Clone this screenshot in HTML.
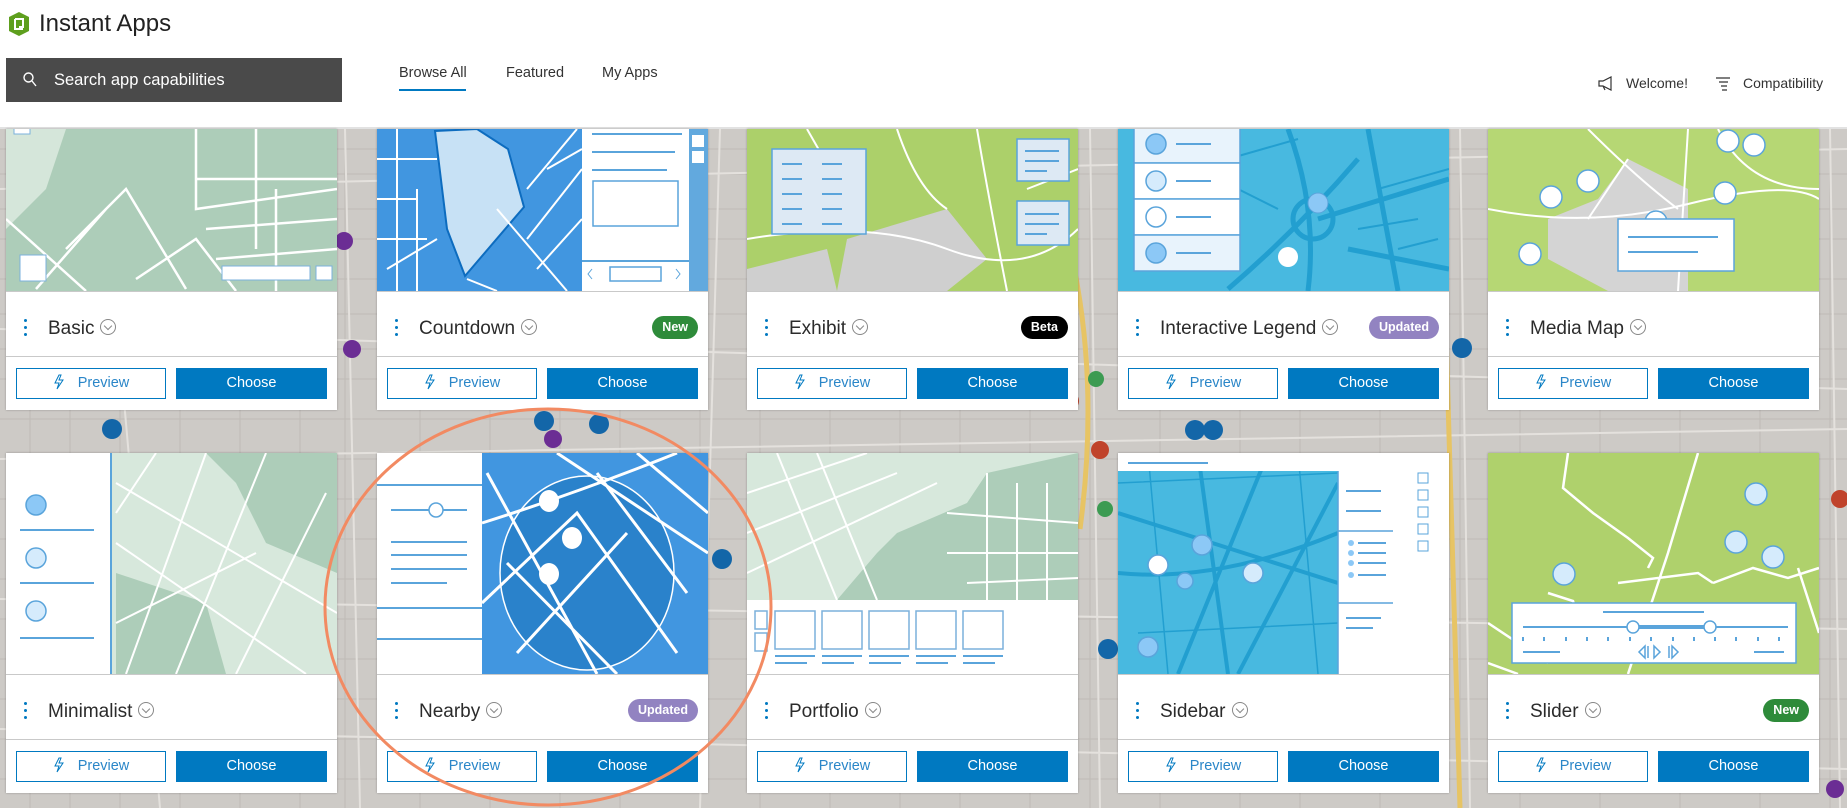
<!DOCTYPE html>
<html><head><meta charset="utf-8">
<style>
*{box-sizing:border-box;margin:0;padding:0}
body{width:1847px;height:808px;overflow:hidden;font-family:"Liberation Sans",sans-serif;position:relative;background:#cdcac6}
#map{position:absolute;left:0;top:129px;width:1847px;height:679px}
#hdr{position:absolute;left:0;top:0;width:1847px;height:129px;background:#fff;border-bottom:2px solid #e2e2e2}
.card{position:absolute;width:331px;background:#fff;box-shadow:0 0 2px rgba(0,0,0,.3)}
.img{display:block;width:331px}
.title{height:66px;border-top:1px solid #c9c9c9;border-bottom:1px solid #c9c9c9;position:relative}
.dots{position:absolute;left:18px;top:27px;width:4px}
.dots i{display:block;width:3px;height:3px;border-radius:50%;background:#0079c1;margin-bottom:4px}
.name{position:absolute;left:42px;top:26px;font-size:19px;color:#2b2b2b}
.chev{display:inline-block;width:16px;height:16px;border:1px solid #888;border-radius:50%;vertical-align:-1px;margin-left:6px;position:relative}
.chev:after{content:"";position:absolute;left:4px;top:3px;width:5px;height:5px;border-right:1px solid #888;border-bottom:1px solid #888;transform:rotate(45deg)}
.badge{position:absolute;right:10px;top:24px;height:23px;line-height:23px;border-radius:12px;color:#fff;font-size:12.5px;font-weight:bold;padding:0 10px}
.btns{height:53px;position:relative}
.pv,.ch{position:absolute;top:11px;height:31px;width:150px;font-size:14.5px;text-align:center;line-height:29px}
.pv{left:10px;border:1px solid #0079c1;color:#2a86c8;background:#fff}
.ch{left:170px;width:151px;background:#0079c1;color:#fff;line-height:31px}
.pv svg{vertical-align:-3px;margin-right:14px}
</style></head><body>
<svg id="map" viewBox="0 0 1847 679">
<rect width="1847" height="679" fill="#cdcac6"/>
<g stroke="#bcb8b3" stroke-width="1" fill="none" opacity=".8">
<path d="M0 20H1847M0 45H1847M0 80H1847M0 110H1847M0 150H1847M0 185H1847M0 220H1847M0 250H1847M0 290H1847M0 330H1847M0 370H1847M0 410H1847M0 450H1847M0 490H1847M0 530H1847M0 570H1847M0 610H1847M0 650H1847"/>
<path d="M30 0V679M70 0V679M120 0V679M180 0V679M240 0V679M300 0V679M345 0V679M420 0V679M490 0V679M560 0V679M620 0V679M700 0V679M760 0V679M830 0V679M900 0V679M960 0V679M1030 0V679M1090 0V679M1160 0V679M1240 0V679M1300 0V679M1380 0V679M1460 0V679M1520 0V679M1600 0V679M1680 0V679M1760 0V679M1830 0V679"/>
</g>
<g stroke="#e4e1dd" stroke-width="2" fill="none">
<path d="M0 60 L1847 20 M0 200 L1847 260 M0 330 L1847 300 M0 470 L1847 500 M0 600 L1847 640 M100 0 L160 679 M345 0 L360 679 M720 0 L700 679 M1090 0 L1100 679 M1460 0 L1470 679 M1830 0 L1840 679"/>
</g>
<path d="M1440 0 L1460 679" stroke="#e7c464" stroke-width="5"/>
<path d="M1070 120 Q1100 250 1080 400" stroke="#e7c464" stroke-width="5" fill="none"/>
<g fill="#1366a8"><circle cx="112" cy="300" r="10"/><circle cx="544" cy="292" r="10"/><circle cx="599" cy="295" r="10"/><circle cx="722" cy="430" r="10"/><circle cx="1195" cy="301" r="10"/><circle cx="1213" cy="301" r="10"/><circle cx="1108" cy="520" r="10"/><circle cx="1462" cy="219" r="10"/></g>
<g fill="#6b2d94"><circle cx="344" cy="112" r="9"/><circle cx="352" cy="220" r="9"/><circle cx="553" cy="310" r="9"/><circle cx="1835" cy="660" r="9"/></g>
<g fill="#c0432b"><circle cx="1070" cy="272" r="9"/><circle cx="1100" cy="321" r="9"/><circle cx="1840" cy="370" r="9"/></g>
<g fill="#3c9b52"><circle cx="1096" cy="250" r="8"/><circle cx="1105" cy="380" r="8"/></g>
</svg>

<div id="hdr">
<svg style="position:absolute;left:8px;top:12px" width="22" height="24" viewBox="0 0 22 24"><path d="M11 0 L21 5 L21 19 L11 24 L1 19 L1 5Z" fill="#5e9f1e"/><path d="M7 7 H15 V15 H11 M7 7 V17 H15" stroke="#fff" stroke-width="2" fill="none"/></svg>
<div style="position:absolute;left:39px;top:10px;font-size:24px;color:#222">Instant Apps</div>
<div style="position:absolute;left:6px;top:58px;width:336px;height:44px;background:#4a4a4a">
<svg style="position:absolute;left:17px;top:14px" width="14" height="15" viewBox="0 0 14 15"><circle cx="5.5" cy="5.5" r="4.5" stroke="#fff" stroke-width="1.4" fill="none"/><path d="M9 9 L13 14" stroke="#fff" stroke-width="1.4"/></svg>
<div style="position:absolute;left:48px;top:13px;font-size:16.5px;color:#fff">Search app capabilities</div></div>
<div style="position:absolute;left:399px;top:65px;font-size:14.5px;color:#333">Browse All</div>
<div style="position:absolute;left:399px;top:89px;width:67px;height:2px;background:#0079c1"></div>
<div style="position:absolute;left:506px;top:65px;font-size:14.5px;color:#333">Featured</div>
<div style="position:absolute;left:602px;top:65px;font-size:14.5px;color:#333">My Apps</div>
<svg style="position:absolute;left:1598px;top:76px" width="16" height="15" viewBox="0 0 16 15"><path d="M1 5 H5 L13 1 V14 L5 10 H1Z M5 10 L7 14" stroke="#333" stroke-width="1.2" fill="none"/></svg>
<div style="position:absolute;left:1626px;top:75px;font-size:14px;color:#333">Welcome!</div>
<svg style="position:absolute;left:1715px;top:76px" width="16" height="16" viewBox="0 0 16 16"><path d="M1 2H15M4 6H13M6 10H12M7 14H12" stroke="#333" stroke-width="1.2"/></svg>
<div style="position:absolute;left:1743px;top:75px;font-size:14px;color:#333">Compatibility</div>
</div>

<!-- Row 1 -->
<div class="card" style="left:6px;top:129px">
<svg class="img" height="162" viewBox="0 0 331 162"><rect width="331" height="162" fill="#adcdb9"/><path d="M0 0 H60 L40 60 L0 100Z" fill="#d5e6da"/><g stroke="#fff" stroke-width="2.5" fill="none"><path d="M190 0 V50 H331 M250 0 V120 M190 50 V80 L331 60 M60 120 L120 60 L180 160 M30 160 L100 80 M0 90 L80 162 M200 100 L331 90 M210 130 L331 120 M270 60 V162 M130 150 L190 110 L230 162"/></g><rect x="14" y="126" width="26" height="26" fill="#fff" stroke="#7bb1dc"/><rect x="216" y="137" width="88" height="14" fill="#fff" stroke="#7bb1dc"/><rect x="310" y="137" width="16" height="14" fill="#fff" stroke="#7bb1dc"/><rect x="8" y="-5" width="16" height="10" fill="#fff" stroke="#7bb1dc"/></svg>
<div class="title"><div class="dots"><i></i><i></i><i></i></div><div class="name">Basic<span class="chev"></span></div></div>
<div class="btns"><div class="pv"><svg width="11" height="16" viewBox="0 0 11 16"><path d="M6 1 L2 9 H6 L4 15 L10 6 H6 L8 1Z" stroke="#0079c1" fill="none"/></svg>Preview</div><div class="ch">Choose</div></div></div>

<div class="card" style="left:377px;top:129px">
<svg class="img" height="162" viewBox="0 0 331 162"><rect width="331" height="162" fill="#4196e0"/><path d="M58 2 L100 0 L131 20 L147 78 L88 147 L70 100Z" fill="#c7e1f5" stroke="#0d6cbf" stroke-width="2"/><g stroke="#fff" stroke-width="2" fill="none"><path d="M0 30 H60 M0 70 H40 M20 0 V162 M40 60 V162 M0 110 H50 M10 140 L60 110 M120 162 L90 150 M120 80 L190 162 M150 60 L200 0 M150 110 L205 40 M160 140 L205 90 M170 40 L205 20"/></g><rect x="205" y="0" width="126" height="162" fill="#fff"/><rect x="312" y="0" width="19" height="162" fill="#62a9de"/><rect x="315" y="6" width="12" height="12" fill="#fff"/><rect x="315" y="22" width="12" height="12" fill="#fff"/><g stroke="#5aa4db" stroke-width="2"><path d="M215 5H305M215 23H298M215 41H290M205 132H312"/></g><rect x="216" y="52" width="85" height="45" fill="none" stroke="#5aa4db" stroke-width="1.5"/><rect x="233" y="138" width="51" height="14" fill="none" stroke="#5aa4db" stroke-width="1.5"/><path d="M215 140l-4 5 4 5M299 140l4 5-4 5" stroke="#5aa4db" fill="none"/></svg>
<div class="title"><div class="dots"><i></i><i></i><i></i></div><div class="name">Countdown<span class="chev"></span></div><div class="badge" style="background:#2e8b3a">New</div></div>
<div class="btns"><div class="pv"><svg width="11" height="16" viewBox="0 0 11 16"><path d="M6 1 L2 9 H6 L4 15 L10 6 H6 L8 1Z" stroke="#0079c1" fill="none"/></svg>Preview</div><div class="ch">Choose</div></div></div>

<div class="card" style="left:747px;top:129px">
<svg class="img" height="162" viewBox="0 0 331 162"><rect width="331" height="162" fill="#acd06a"/><path d="M100 110 L200 80 L240 130 L200 162 L90 162Z" fill="#cfcfcf"/><path d="M0 140 L80 120 L90 162 H0Z" fill="#cfcfcf"/><g stroke="#fff" stroke-width="2" fill="none"><path d="M0 110 Q120 90 200 120 T331 100 M150 0 Q170 60 200 80 M230 0 Q240 60 260 162 M60 0 L100 70 M280 60 L331 40"/></g><rect x="25" y="20" width="94" height="85" fill="#dde9f4" stroke="#5aa4db" stroke-width="1.5"/><g stroke="#5aa4db" stroke-width="2"><path d="M35 35H55M75 35H95M35 50H55M75 50H95M35 65H55M75 65H95M35 80H55M75 80H95M35 95H55M75 95H95"/></g><rect x="270" y="10" width="52" height="42" fill="#dde9f4" stroke="#5aa4db" stroke-width="1.5"/><path d="M278 22H312M278 32H312M278 42H300" stroke="#5aa4db" stroke-width="2"/><rect x="270" y="72" width="52" height="44" fill="#dde9f4" stroke="#5aa4db" stroke-width="1.5"/><path d="M278 85H312M278 95H312M278 105H300" stroke="#5aa4db" stroke-width="2"/></svg>
<div class="title"><div class="dots"><i></i><i></i><i></i></div><div class="name">Exhibit<span class="chev"></span></div><div class="badge" style="background:#000">Beta</div></div>
<div class="btns"><div class="pv"><svg width="11" height="16" viewBox="0 0 11 16"><path d="M6 1 L2 9 H6 L4 15 L10 6 H6 L8 1Z" stroke="#0079c1" fill="none"/></svg>Preview</div><div class="ch">Choose</div></div></div>

<div class="card" style="left:1118px;top:129px">
<svg class="img" height="162" viewBox="0 0 331 162"><rect width="331" height="162" fill="#48b9e0"/><g stroke="#229fd0" stroke-width="5" fill="none"><path d="M170 0 Q200 80 190 162 M110 160 Q180 100 240 30 M200 90 L331 50 M230 120 L331 140 M250 0 L280 162"/><circle cx="195" cy="90" r="20"/></g><g stroke="#229fd0" stroke-width="2" fill="none"><path d="M110 30 L180 10 M120 60 L160 80 M260 60 L331 40 M240 100 L300 90 M280 120 L320 110"/></g><circle cx="200" cy="74" r="10" fill="#8cc8f6" stroke="#5aa4db"/><circle cx="170" cy="128" r="10" fill="#fff"/><g fill="#e8f3fc" stroke="#5aa4db" stroke-width="1.5"><rect x="16" y="-2" width="106" height="36"/><rect x="16" y="34" width="106" height="36" fill="#fff"/><rect x="16" y="70" width="106" height="36" fill="#fff"/><rect x="16" y="106" width="106" height="36"/></g><g stroke="#5aa4db" stroke-width="1.5"><circle cx="38" cy="15" r="10" fill="#8cc8f6"/><circle cx="38" cy="52" r="10" fill="#d5ebfc"/><circle cx="38" cy="88" r="10" fill="#fff"/><circle cx="38" cy="124" r="10" fill="#8cc8f6"/></g><path d="M58 15H93M58 52H93M58 88H93M58 124H93" stroke="#5aa4db" stroke-width="2"/></svg>
<div class="title"><div class="dots"><i></i><i></i><i></i></div><div class="name">Interactive Legend<span class="chev"></span></div><div class="badge" style="background:#9283c1">Updated</div></div>
<div class="btns"><div class="pv"><svg width="11" height="16" viewBox="0 0 11 16"><path d="M6 1 L2 9 H6 L4 15 L10 6 H6 L8 1Z" stroke="#0079c1" fill="none"/></svg>Preview</div><div class="ch">Choose</div></div></div>

<div class="card" style="left:1488px;top:129px">
<svg class="img" height="162" viewBox="0 0 331 162"><rect width="331" height="162" fill="#b6d774"/><path d="M60 90 L110 70 L140 30 L200 60 L200 162 L120 162 L60 130Z" fill="#d4d4d4"/><g stroke="#fff" stroke-width="2" fill="none"><path d="M0 80 Q100 100 200 75 T331 70 M100 0 Q150 50 190 80 M140 30 L100 90 M230 0 Q260 60 331 60 M200 0 L190 162"/></g><g fill="#fff" stroke="#5aa4db" stroke-width="1.5"><circle cx="63" cy="68" r="11"/><circle cx="100" cy="52" r="11"/><circle cx="168" cy="93" r="11"/><circle cx="42" cy="125" r="11"/><circle cx="240" cy="12" r="11"/><circle cx="266" cy="16" r="11"/><circle cx="237" cy="64" r="11"/></g><rect x="130" y="90" width="116" height="52" fill="#fff" stroke="#5aa4db" stroke-width="1.5"/><path d="M140 108H230M140 123H210" stroke="#5aa4db" stroke-width="2"/></svg>
<div class="title"><div class="dots"><i></i><i></i><i></i></div><div class="name">Media Map<span class="chev"></span></div></div>
<div class="btns"><div class="pv"><svg width="11" height="16" viewBox="0 0 11 16"><path d="M6 1 L2 9 H6 L4 15 L10 6 H6 L8 1Z" stroke="#0079c1" fill="none"/></svg>Preview</div><div class="ch">Choose</div></div></div>

<!-- Row 2 -->
<div class="card" style="left:6px;top:453px">
<svg class="img" height="221" viewBox="0 0 331 221"><rect width="331" height="221" fill="#d7e8dc"/><path d="M200 0 H331 V120 L260 90 L230 30Z" fill="#adcdb9"/><path d="M110 120 L200 150 L220 221 H110Z" fill="#adcdb9"/><g stroke="#fff" stroke-width="2" fill="none"><path d="M110 30 L331 160 M110 90 L300 221 M150 0 L110 60 M200 0 L120 221 M260 0 L170 221 M320 40 L230 221 M110 170 L250 100"/></g><rect x="0" y="0" width="105" height="221" fill="#fff"/><g stroke="#5aa4db" stroke-width="1.5"><circle cx="30" cy="52" r="10" fill="#8cc8f6"/><circle cx="30" cy="105" r="10" fill="#d5ebfc"/><circle cx="30" cy="158" r="10" fill="#d5ebfc"/></g><path d="M14 77H88M14 130H88M14 185H88M105 0V221" stroke="#5aa4db" stroke-width="2"/></svg>
<div class="title"><div class="dots"><i></i><i></i><i></i></div><div class="name">Minimalist<span class="chev"></span></div></div>
<div class="btns"><div class="pv"><svg width="11" height="16" viewBox="0 0 11 16"><path d="M6 1 L2 9 H6 L4 15 L10 6 H6 L8 1Z" stroke="#0079c1" fill="none"/></svg>Preview</div><div class="ch">Choose</div></div></div>

<div class="card" style="left:377px;top:453px">
<svg class="img" height="221" viewBox="0 0 331 221"><rect width="331" height="221" fill="#4196e0"/><ellipse cx="210" cy="120" rx="87" ry="97" fill="#2a82cb" stroke="#fff" stroke-width="1.5"/><g stroke="#fff" stroke-width="3" fill="none"><path d="M105 70 Q200 40 300 0 M180 0 L331 100 M105 150 L200 60 L300 200 M140 200 L250 80 M110 20 L220 221 M260 0 L331 60 M220 20 L310 140 M130 110 L240 221"/></g><g fill="#fff"><ellipse cx="172" cy="48" rx="10" ry="11"/><ellipse cx="195" cy="85" rx="10" ry="11"/><ellipse cx="172" cy="121" rx="10" ry="11"/></g><rect x="0" y="0" width="105" height="221" fill="#fff"/><g stroke="#5aa4db" stroke-width="2"><path d="M0 32H105M14 57H90M14 89H90M14 102H90M14 116H90M14 130H70M0 155H105M0 186H105"/></g><circle cx="59" cy="57" r="7" fill="#fff" stroke="#5aa4db" stroke-width="1.5"/></svg>
<div class="title"><div class="dots"><i></i><i></i><i></i></div><div class="name">Nearby<span class="chev"></span></div><div class="badge" style="background:#9283c1">Updated</div></div>
<div class="btns"><div class="pv"><svg width="11" height="16" viewBox="0 0 11 16"><path d="M6 1 L2 9 H6 L4 15 L10 6 H6 L8 1Z" stroke="#0079c1" fill="none"/></svg>Preview</div><div class="ch">Choose</div></div></div>

<div class="card" style="left:747px;top:453px">
<svg class="img" height="221" viewBox="0 0 331 221"><rect width="331" height="221" fill="#d7e8dc"/><path d="M150 80 L220 50 L240 20 L331 0 V147 H90 L130 100Z" fill="#adcdb9"/><g stroke="#fff" stroke-width="2" fill="none"><path d="M0 40 L120 0 M0 80 L150 20 M0 120 L190 30 M30 0 L90 147 M70 0 L130 147 M200 60 L331 70 M200 100 L331 100 M220 130 L331 125 M240 20 V147 M270 30 V147 M300 30 V147"/></g><rect x="0" y="147" width="331" height="74" fill="#fff"/><g fill="none" stroke="#7bb1dc" stroke-width="1.5"><rect x="8" y="158" width="12" height="18"/><rect x="8" y="180" width="12" height="18"/><rect x="28" y="158" width="40" height="38"/><rect x="75" y="158" width="40" height="38"/><rect x="122" y="158" width="40" height="38"/><rect x="169" y="158" width="40" height="38"/><rect x="216" y="158" width="40" height="38"/></g><g stroke="#5aa4db" stroke-width="2"><path d="M28 203H68M28 210H60M75 203H115M75 210H107M122 203H162M122 210H154M169 203H209M169 210H201M216 203H256M216 210H248"/></g></svg>
<div class="title"><div class="dots"><i></i><i></i><i></i></div><div class="name">Portfolio<span class="chev"></span></div></div>
<div class="btns"><div class="pv"><svg width="11" height="16" viewBox="0 0 11 16"><path d="M6 1 L2 9 H6 L4 15 L10 6 H6 L8 1Z" stroke="#0079c1" fill="none"/></svg>Preview</div><div class="ch">Choose</div></div></div>

<div class="card" style="left:1118px;top:453px">
<svg class="img" height="221" viewBox="0 0 331 221"><rect width="331" height="221" fill="#48b9e0"/><g stroke="#229fd0" stroke-width="4" fill="none"><path d="M0 120 Q100 130 220 80 M80 0 L110 221 M0 60 L220 130 M150 0 L60 221 M220 30 L120 221"/></g><g stroke="#229fd0" stroke-width="1.5" fill="none"><path d="M0 30 L220 20 M20 180 L220 170 M180 0 L200 221 M30 0 L50 221"/></g><rect x="0" y="0" width="331" height="18" fill="#fff"/><path d="M10 10H90" stroke="#5aa4db" stroke-width="2"/><rect x="220" y="18" width="111" height="203" fill="#fff"/><path d="M220 18V221M220 78H275M220 150H275" stroke="#5aa4db" stroke-width="1.5"/><g stroke="#5aa4db" stroke-width="2"><path d="M228 38H263M228 58H263M240 90H268M240 100H268M240 110H268M240 122H268M228 165H263M228 175H255"/></g><g fill="#fff" stroke="#5aa4db"><rect x="300" y="20" width="10" height="10"/><rect x="300" y="37" width="10" height="10"/><rect x="300" y="54" width="10" height="10"/><rect x="300" y="71" width="10" height="10"/><rect x="300" y="88" width="10" height="10"/></g><g fill="#8cc8f6"><circle cx="233" cy="90" r="3"/><circle cx="233" cy="100" r="3"/><circle cx="233" cy="110" r="3"/><circle cx="233" cy="122" r="3"/></g><g stroke="#5aa4db" stroke-width="1.5"><circle cx="84" cy="92" r="10" fill="#8cc8f6"/><circle cx="40" cy="112" r="10" fill="#fff"/><circle cx="67" cy="128" r="8" fill="#8cc8f6"/><circle cx="135" cy="120" r="10" fill="#d5ebfc"/><circle cx="30" cy="194" r="10" fill="#8cc8f6"/></g></svg>
<div class="title"><div class="dots"><i></i><i></i><i></i></div><div class="name">Sidebar<span class="chev"></span></div></div>
<div class="btns"><div class="pv"><svg width="11" height="16" viewBox="0 0 11 16"><path d="M6 1 L2 9 H6 L4 15 L10 6 H6 L8 1Z" stroke="#0079c1" fill="none"/></svg>Preview</div><div class="ch">Choose</div></div></div>

<div class="card" style="left:1488px;top:453px">
<svg class="img" height="221" viewBox="0 0 331 221"><rect width="331" height="221" fill="#afd16c"/><g stroke="#fff" stroke-width="2.5" fill="none"><path d="M80 0 L75 35 L105 60 L140 85 L165 105 L160 115 M210 0 L180 100 L140 221 M0 170 L60 210 M225 130 L265 115 L300 125 L331 115 M130 130 L210 120 L225 130 M310 115 L331 180 M60 140 L85 148 L90 165 M0 210 L30 221"/></g><g fill="#d5ebfc" stroke="#5aa4db" stroke-width="1.5"><circle cx="268" cy="41" r="11"/><circle cx="248" cy="89" r="11"/><circle cx="285" cy="104" r="11"/><circle cx="76" cy="121" r="11"/></g><rect x="24" y="150" width="284" height="60" fill="#fff" stroke="#5aa4db" stroke-width="1.5"/><path d="M115 159H216M35 174H300M35 184V188M56 184V188M78 184V188M99 184V188M120 184V188M142 184V188M163 184V188M185 184V188M206 184V188M227 184V188M248 184V188M270 184V188M291 184V188M35 199H72M266 199H296" stroke="#5aa4db" stroke-width="2"/><path d="M145 174H222" stroke="#5aa4db" stroke-width="4"/><g fill="#fff" stroke="#5aa4db" stroke-width="1.5"><circle cx="145" cy="174" r="6"/><circle cx="222" cy="174" r="6"/></g><path d="M157 193l-6 6 6 6zM160 193v12M166 193l6 6-6 6zM181 193v12M184 193l6 6-6 6z" fill="none" stroke="#5aa4db" stroke-width="1.5"/></svg>
<div class="title"><div class="dots"><i></i><i></i><i></i></div><div class="name">Slider<span class="chev"></span></div><div class="badge" style="background:#2e8b3a">New</div></div>
<div class="btns"><div class="pv"><svg width="11" height="16" viewBox="0 0 11 16"><path d="M6 1 L2 9 H6 L4 15 L10 6 H6 L8 1Z" stroke="#0079c1" fill="none"/></svg>Preview</div><div class="ch">Choose</div></div></div>

<svg style="position:absolute;left:0;top:0" width="1847" height="808"><ellipse cx="548" cy="607" rx="223" ry="198" fill="none" stroke="#f28a62" stroke-width="3"/></svg>
</body></html>
